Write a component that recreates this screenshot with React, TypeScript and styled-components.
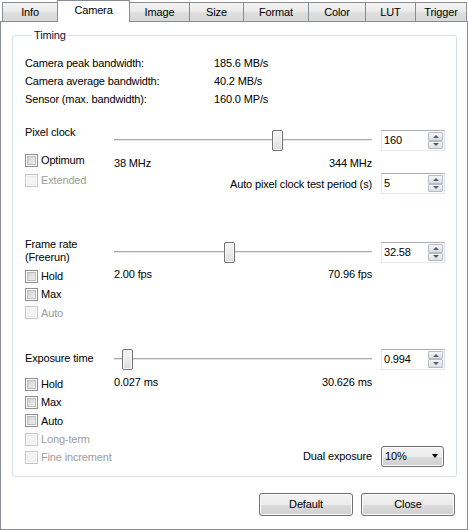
import React from 'react';
import styled, { createGlobalStyle } from 'styled-components';

const GlobalStyle = createGlobalStyle`
  html, body {
    margin: 0;
    padding: 0;
    background: #fff;
  }
  body {
    font-family: "Liberation Sans", Arial, sans-serif;
    font-size: 11px;
    letter-spacing: -0.15px;
    color: #000;
  }
  #root {
    width: 468px;
    height: 530px;
  }
`;

const Window = styled.div`
  width: 468px;
  height: 530px;
  display: flex;
  flex-direction: column;
  background: #fff;
`;

const TabStrip = styled.div`
  display: flex;
  align-items: flex-start;
  height: 21px;
  padding-left: 2px;
  position: relative;
  z-index: 1;
`;

const Tab = styled.div<{ $w: number; $active?: boolean }>`
  box-sizing: border-box;
  width: ${p => p.$w}px;
  margin-left: -1px;
  &:first-child {
    margin-left: 0;
  }
  border: 1px solid #898c95;
  border-bottom: none;
  text-align: center;
  line-height: 18px;
  margin-top: ${p => (p.$active ? 0 : 2)}px;
  height: ${p => (p.$active ? 22 : 19)}px;
  background: ${p =>
    p.$active
      ? '#fff'
      : 'linear-gradient(180deg, #f3f3f3 0%, #ebebeb 45%, #dedede 55%, #d8d8d8 100%)'};
  position: relative;
  z-index: ${p => (p.$active ? 2 : 1)};
`;

const Pane = styled.div`
  flex: 1;
  box-sizing: border-box;
  border: 1px solid #898c95;
  display: flex;
  flex-direction: column;
  padding: 0 10px 0 11px;
`;

const Group = styled.fieldset`
  margin: 7px 0 0 0;
  padding: 12px 11px 9px 12px;
  border: 1px solid #d5dfe5;
  border-radius: 3px;
  min-width: 0;
`;

const Legend = styled.legend`
  margin-left: 7px;
  padding: 0 2px;
  line-height: 13px;
  color: #10103c;
`;

const InfoRow = styled.div`
  display: flex;
  height: 18px;
  line-height: 18px;
`;

const InfoLabel = styled.span`
  width: 189px;
  flex-shrink: 0;
`;

const Section = styled.div<{ $mt: number }>`
  display: flex;
  align-items: flex-start;
  margin-top: ${p => p.$mt}px;
`;

const LeftCol = styled.div`
  width: 89px;
  flex-shrink: 0;
  display: flex;
  flex-direction: column;
`;

const Caption = styled.div<{ $mt?: number }>`
  line-height: 13px;
  margin-top: ${p => p.$mt ?? 0}px;
`;

const CheckList = styled.div<{ $mt: number; $row: number }>`
  display: flex;
  flex-direction: column;
  margin-top: ${p => p.$mt}px;
  & > * {
    height: ${p => p.$row}px;
  }
`;

const CheckRow = styled.label<{ $disabled?: boolean }>`
  display: flex;
  align-items: center;
  gap: 3px;
  white-space: nowrap;
  color: ${p => (p.$disabled ? '#9d9d9d' : '#000')};
`;

const Box = styled.span<{ $disabled?: boolean }>`
  box-sizing: border-box;
  width: 13px;
  height: 13px;
  flex-shrink: 0;
  border: 1px solid ${p => (p.$disabled ? '#c6c6c6' : '#8e8f8f')};
  padding: 1px;
  background: #fff;
  &::after {
    content: '';
    display: block;
    width: 9px;
    height: 9px;
    background: ${p =>
      p.$disabled
        ? '#f4f4f4'
        : 'linear-gradient(135deg, #cbcbcb 0%, #dedede 45%, #f6f6f6 100%)'};
    box-shadow: inset 0 0 0 1px ${p => (p.$disabled ? '#ededed' : '#bcbcbc')};
  }
`;

const RightCol = styled.div`
  display: flex;
  flex-direction: column;
`;

const SliderRow = styled.div`
  display: flex;
  align-items: center;
  gap: 9px;
  margin-top: 4px;
`;

const Slider = styled.div`
  position: relative;
  width: 258px;
  height: 21px;
  &::before {
    content: '';
    position: absolute;
    left: 0;
    right: 0;
    top: 9px;
    height: 1px;
    background: #acacac;
    border-bottom: 1px solid #e4e4e4;
  }
`;

const Thumb = styled.div`
  position: absolute;
  top: 0;
  box-sizing: border-box;
  width: 11px;
  height: 21px;
  border: 1px solid #707070;
  border-radius: 2px;
  background: linear-gradient(180deg, #f4f4f4 0%, #ececec 50%, #dcdcdc 100%);
  box-shadow: inset 0 0 0 1px #fbfbfb;
`;

const RangeRow = styled.div<{ $mt: number }>`
  width: 258px;
  display: flex;
  justify-content: space-between;
  line-height: 14px;
  margin-top: ${p => p.$mt}px;
`;

const ParamRow = styled.div<{ $mt: number }>`
  display: flex;
  align-items: center;
  gap: 9px;
  margin-top: ${p => p.$mt}px;
`;

const ParamLabel = styled.span`
  width: 258px;
  text-align: right;
  white-space: nowrap;
`;

const Spin = styled.div`
  box-sizing: border-box;
  width: 64px;
  height: 21px;
  display: flex;
  border: 1px solid;
  border-color: #abadb3 #dbdfe6 #e3e9ef #e2e3ea;
  background: #fff;
`;

const SpinText = styled.span`
  flex: 1;
  padding-left: 2px;
  line-height: 18px;
`;

const SpinButtons = styled.div`
  width: 15px;
  display: flex;
  flex-direction: column;
  padding: 1px 1px 1px 0;
`;

const SpinButton = styled.div<{ $down?: boolean }>`
  flex: 1;
  box-sizing: border-box;
  border: 1px solid #b6bdc6;
  border-radius: 1px;
  background: linear-gradient(180deg, #f6f6f6 0%, #e9e9e9 55%, #dcdcdc 100%);
  display: flex;
  align-items: center;
  justify-content: center;
  &::after {
    content: '';
    width: 0;
    height: 0;
    border-left: 3px solid transparent;
    border-right: 3px solid transparent;
    ${p =>
      p.$down ? 'border-top: 3px solid #4b5d7a;' : 'border-bottom: 3px solid #4b5d7a;'}
  }
`;

const Select = styled.div`
  box-sizing: border-box;
  width: 63px;
  height: 21px;
  border: 1px solid #707070;
  border-radius: 3px;
  background: linear-gradient(180deg, #f2f2f2 0%, #ebebeb 50%, #dddddd 50%, #cfcfcf 100%);
  box-shadow: inset 0 0 0 1px #fcfcfc;
  display: flex;
  align-items: center;
  justify-content: space-between;
  padding: 0 5px 0 3px;
  &::after {
    content: '';
    width: 0;
    height: 0;
    border-left: 3.5px solid transparent;
    border-right: 3.5px solid transparent;
    border-top: 4px solid #000;
  }
`;

const ButtonBar = styled.div`
  display: flex;
  justify-content: flex-end;
  gap: 8px;
  margin-top: 16px;
  padding-right: 2px;
`;

const Button = styled.button`
  box-sizing: border-box;
  width: 94px;
  height: 23px;
  border: 1px solid #707070;
  border-radius: 3px;
  background: linear-gradient(180deg, #f2f2f2 0%, #ebebeb 50%, #dddddd 50%, #cfcfcf 100%);
  box-shadow: inset 0 0 0 1px #fcfcfc;
  font: inherit;
  letter-spacing: inherit;
  color: #000;
  padding: 0;
`;

const tabs = [
  { label: 'Info', w: 56 },
  { label: 'Camera', w: 73, active: true },
  { label: 'Image', w: 61 },
  { label: 'Size', w: 55 },
  { label: 'Format', w: 66 },
  { label: 'Color', w: 58 },
  { label: 'LUT', w: 51 },
  { label: 'Trigger', w: 52 },
];

const info = [
  ['Camera peak bandwidth:', '185.6 MB/s'],
  ['Camera average bandwidth:', '40.2 MB/s'],
  ['Sensor (max. bandwidth):', '160.0 MP/s'],
];

const TRAVEL = 258 - 11;

const SpinBox = ({ value }: { value: string }) => (
  <Spin>
    <SpinText>{value}</SpinText>
    <SpinButtons>
      <SpinButton />
      <SpinButton $down />
    </SpinButtons>
  </Spin>
);

const Check = ({ label, disabled }: { label: string; disabled?: boolean }) => (
  <CheckRow $disabled={disabled}>
    <Box $disabled={disabled} />
    {label}
  </CheckRow>
);

const TrackBar = ({ pos }: { pos: number }) => (
  <Slider>
    <Thumb style={{ left: Math.round(pos * TRAVEL) }} />
  </Slider>
);

export default function App() {
  return (
    <Window>
      <GlobalStyle />
      <TabStrip>
        {tabs.map(t => (
          <Tab key={t.label} $w={t.w} $active={t.active}>
            {t.label}
          </Tab>
        ))}
      </TabStrip>
      <Pane>
        <Group>
          <Legend>Timing</Legend>
          {info.map(([k, v]) => (
            <InfoRow key={k}>
              <InfoLabel>{k}</InfoLabel>
              <span>{v}</span>
            </InfoRow>
          ))}

          <Section $mt={18}>
            <LeftCol>
              <Caption>Pixel clock</Caption>
              <CheckList $mt={11} $row={20}>
                <Check label="Optimum" />
                <Check label="Extended" disabled />
              </CheckList>
            </LeftCol>
            <RightCol>
              <SliderRow>
                <TrackBar pos={0.64} />
                <SpinBox value="160" />
              </SliderRow>
              <RangeRow $mt={5}>
                <span>38 MHz</span>
                <span>344 MHz</span>
              </RangeRow>
              <ParamRow $mt={3}>
                <ParamLabel>Auto pixel clock test period (s)</ParamLabel>
                <SpinBox value="5" />
              </ParamRow>
            </RightCol>
          </Section>

          <Section $mt={44}>
            <LeftCol>
              <Caption>
                Frame rate
                <br />
                (Freerun)
              </Caption>
              <CheckList $mt={3} $row={18.33}>
                <Check label="Hold" />
                <Check label="Max" />
                <Check label="Auto" disabled />
              </CheckList>
            </LeftCol>
            <RightCol>
              <SliderRow>
                <TrackBar pos={0.445} />
                <SpinBox value="32.58" />
              </SliderRow>
              <RangeRow $mt={4}>
                <span>2.00 fps</span>
                <span>70.96 fps</span>
              </RangeRow>
            </RightCol>
          </Section>

          <Section $mt={23}>
            <LeftCol>
              <Caption $mt={7}>Exposure time</Caption>
              <CheckList $mt={10} $row={18.33}>
                <Check label="Hold" />
                <Check label="Max" />
                <Check label="Auto" />
                <Check label="Long-term" disabled />
                <Check label="Fine increment" disabled />
              </CheckList>
            </LeftCol>
            <RightCol>
              <SliderRow>
                <TrackBar pos={0.032} />
                <SpinBox value="0.994" />
              </SliderRow>
              <RangeRow $mt={5}>
                <span>0.027 ms</span>
                <span>30.626 ms</span>
              </RangeRow>
              <ParamRow $mt={57}>
                <ParamLabel>Dual exposure</ParamLabel>
                <Select>10%</Select>
              </ParamRow>
            </RightCol>
          </Section>
        </Group>
        <ButtonBar>
          <Button>Default</Button>
          <Button>Close</Button>
        </ButtonBar>
      </Pane>
    </Window>
  );
}
